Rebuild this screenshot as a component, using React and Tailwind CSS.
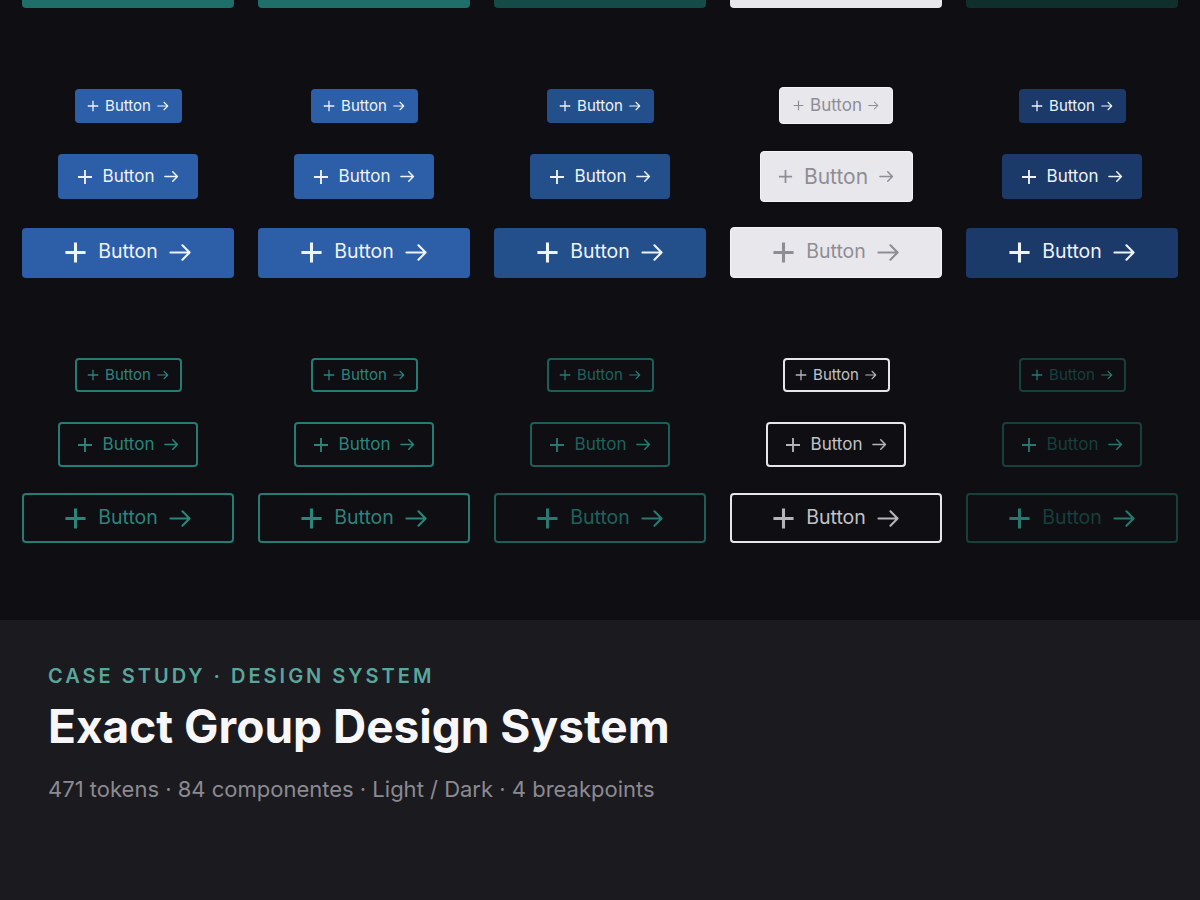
import React from "react";

function Plus({ size, sw }) {
  return (
    <svg width={size} height={size} viewBox="0 0 24 24" fill="none" className="shrink-0">
      <path d="M12 1.5v21M1.5 12h21" stroke="currentColor" strokeWidth={sw} strokeLinecap="butt" />
    </svg>
  );
}

function Arrow({ size, sw }) {
  return (
    <svg width={size} height={size} viewBox="0 0 24 24" fill="none" className="shrink-0">
      <path d="M1.5 12h20M14 4.5l7.5 7.5-7.5 7.5" stroke="currentColor" strokeWidth={sw} strokeLinecap="round" strokeLinejoin="round" />
    </svg>
  );
}

const SIZES = {
  sm: { box: "w-[107px] h-[34px] gap-[6px] text-[15px]", plus: 12, psw: 2.6, arrow: 12, asw: 2.2 },
  md: { box: "w-[140px] h-[45px] gap-[10px] text-[17px]", plus: 16, psw: 2.8, arrow: 15, asw: 2.4 },
  lg: { box: "w-[212px] h-[50px] gap-[11px] text-[19.5px]", plus: 23, psw: 3.2, arrow: 23, asw: 2.2 },
  smAlt: { box: "w-[114px] h-[37px] gap-[6px] text-[17px]", plus: 11, psw: 2.6, arrow: 11, asw: 2.2 },
  mdAlt: { box: "w-[153px] h-[51px] gap-[11px] text-[21px]", plus: 15, psw: 2.8, arrow: 15, asw: 2.4 },
  lgAlt: { box: "w-[212px] h-[51px] gap-[11px] text-[19.5px]", plus: 23, psw: 3.2, arrow: 23, asw: 2.2 },
};

function Btn({ size, cls, iconCls = "" }) {
  const s = SIZES[size];
  return (
    <div className={`flex items-center justify-center rounded-[4px] leading-none ${s.box} ${cls}`}>
      <span className={`flex ${iconCls}`}>
        <Plus size={s.plus} sw={s.psw} />
      </span>
      <span className="pb-[1px]">Button</span>
      <span className={`flex ${iconCls}`}>
        <Arrow size={s.arrow} sw={s.asw} />
      </span>
    </div>
  );
}

const FILLED = [
  { cls: "bg-[#2c5fa8] text-[#eef2fa]" },
  { cls: "bg-[#2c5fa8] text-[#eef2fa]" },
  { cls: "bg-[#234f8b] text-[#eef2fa]" },
  { cls: "bg-[#e8e7ec] text-[#8e8d94] border border-[#f4f4f6]", alt: true },
  { cls: "bg-[#1b3a6a] text-[#eef2fa]" },
];

const OUTLINE = [
  { cls: "border-2 border-[#247d74] text-[#2a857b]" },
  { cls: "border-2 border-[#247d74] text-[#2a857b]" },
  { cls: "border-2 border-[#1c5e58] text-[#1f625c]", icon: "text-[#267a72]" },
  { cls: "border-2 border-[#e6e6ea] text-[#c2c2c7]", icon: "text-[#b4b4b9]" },
  { cls: "border-2 border-[#15403c] text-[#173f3b]", icon: "text-[#26786f]" },
];

const TOP = ["bg-[#1e6e69]", "bg-[#1e6e69]", "bg-[#154b47]", "bg-[#e8e7ec]", "bg-[#0f2f2c]"];

function Row({ h, items, size, altSize, className = "" }) {
  return (
    <div className={`grid grid-cols-5 gap-x-6 items-center justify-items-center ${h} ${className}`}>
      {items.map((it, i) => (
        <Btn key={i} size={it.alt ? altSize : size} cls={it.cls} iconCls={it.icon || ""} />
      ))}
    </div>
  );
}

export default function App() {
  return (
    <div className="w-[1200px] h-[900px] bg-[#0f0e13] flex flex-col font-['Inter','Noto_Sans',sans-serif] overflow-hidden">
      <div className="flex-1 px-[22px] flex flex-col">
        <div className="grid grid-cols-5 gap-x-6 h-[8px]">
          {TOP.map((c, i) => (
            <div key={i} className="h-[8px] overflow-hidden flex flex-col justify-end">
              <div className={`shrink-0 h-[50px] rounded-[4px] ${c}`} />
            </div>
          ))}
        </div>

        <Row h="h-[37px]" className="mt-[79px]" items={FILLED} size="sm" altSize="smAlt" />
        <Row h="h-[51px]" className="mt-[27px]" items={FILLED} size="md" altSize="mdAlt" />
        <Row h="h-[51px]" className="mt-[25px]" items={FILLED} size="lg" altSize="lgAlt" />

        <Row h="h-[35px]" className="mt-[79px]" items={OUTLINE} size="sm" />
        <Row h="h-[45px]" className="mt-[30px]" items={OUTLINE} size="md" />
        <Row h="h-[50px]" className="mt-[26px]" items={OUTLINE} size="lg" />
      </div>

      <div className="h-[280px] shrink-0 bg-[#1b1a1f] px-[48px] pt-[44px] flex flex-col">
        <div className="text-[20px] leading-[24px] font-semibold tracking-[0.15em] text-[#5aa69c]">
          CASE STUDY · DESIGN SYSTEM
        </div>
        <div className="mt-[12px] text-[46px] leading-[52px] font-bold text-[#f7f7f9]">
          Exact Group Design System
        </div>
        <div className="mt-[23px] text-[22px] leading-[28px] text-[#8b8a92]">
          471 tokens · 84 componentes · Light / Dark · 4 breakpoints
        </div>
      </div>
    </div>
  );
}
